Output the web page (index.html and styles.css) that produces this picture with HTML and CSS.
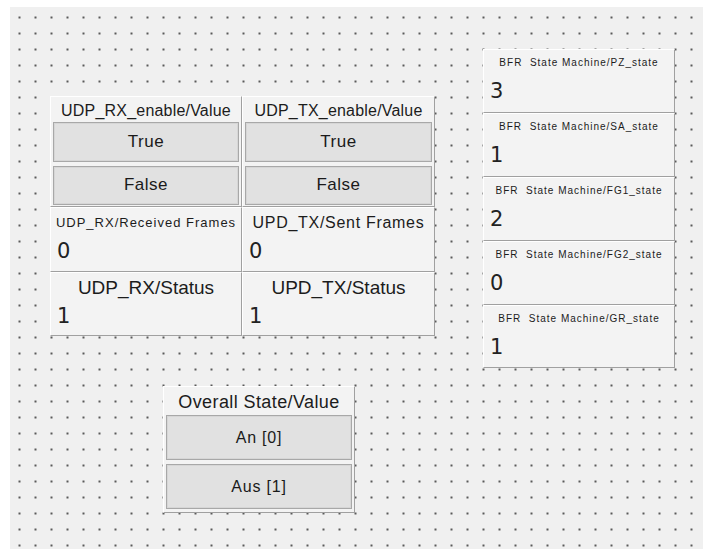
FILE: index.html
```html
<html>

<head>
    <meta name="viewport" content="width=device-width, initial-scale=1.0">
    <meta charset="UTF-8">
    <title>Panel</title>
    <link rel="stylesheet" href="styles.css">
</head>

<body>
    <div id="canvas">
        <div id="top-row">
            <div id="udp">
                <div class="panel switch">
                    <div class="caption">UDP_RX_enable/Value</div>
                    <button class="btn">True</button>
                    <button class="btn">False</button>
                </div>
                <div class="panel switch">
                    <div class="caption">UDP_TX_enable/Value</div>
                    <button class="btn">True</button>
                    <button class="btn">False</button>
                </div>
                <div class="panel readout">
                    <div class="caption small">UDP_RX/Received Frames</div>
                    <div class="value">0</div>
                </div>
                <div class="panel readout">
                    <div class="caption mid">UPD_TX/Sent Frames</div>
                    <div class="value">0</div>
                </div>
                <div class="panel readout">
                    <div class="caption big">UDP_RX/Status</div>
                    <div class="value">1</div>
                </div>
                <div class="panel readout">
                    <div class="caption big">UPD_TX/Status</div>
                    <div class="value">1</div>
                </div>
            </div>
            <div id="bfr">
                <div class="panel state">
                    <div class="caption tiny">BFR&nbsp; State Machine/PZ_state</div>
                    <div class="value">3</div>
                </div>
                <div class="panel state">
                    <div class="caption tiny">BFR&nbsp; State Machine/SA_state</div>
                    <div class="value">1</div>
                </div>
                <div class="panel state">
                    <div class="caption tiny">BFR&nbsp; State Machine/FG1_state</div>
                    <div class="value">2</div>
                </div>
                <div class="panel state">
                    <div class="caption tiny">BFR&nbsp; State Machine/FG2_state</div>
                    <div class="value">0</div>
                </div>
                <div class="panel state last">
                    <div class="caption tiny">BFR&nbsp; State Machine/GR_state</div>
                    <div class="value">1</div>
                </div>
            </div>
        </div>
        <div id="overall" class="panel switch">
            <div class="caption">Overall State/Value</div>
            <button class="btn">An [0]</button>
            <button class="btn">Aus [1]</button>
        </div>
    </div>
</body>

</html>
```

FILE: styles.css
```css
body {
    margin: 0;
    background: #ffffff;
    font-family: "Liberation Sans", Arial, sans-serif;
    color: #1c1c1c;
}

#canvas {
    margin-left: 10px;
    margin-top: 7px;
    width: 693px;
    height: 542px;
    box-sizing: border-box;
    padding-top: 42px;
    background-color: #f0f0f0;
    background-image: radial-gradient(circle, #5a5a5a 0.8px, rgba(90, 90, 90, 0) 1.3px);
    background-size: 16px 16px;
    background-position: 1.5px 2.5px;
}

#top-row {
    display: flex;
    align-items: flex-start;
}

.panel {
    box-sizing: border-box;
    background: #f3f3f3;
    border: 1px solid;
    border-color: #ffffff #a0a0a0 #a0a0a0 #ffffff;
}

.caption {
    text-align: center;
    white-space: nowrap;
}

.value {
    font-family: "DejaVu Sans", sans-serif;
    font-size: 21px;
    padding-left: 6px;
    color: #222;
}

/* udp block */
#udp {
    margin-left: 40px;
    margin-top: 47px;
    display: grid;
    grid-template-columns: 192px 193px;
    grid-template-rows: 111px 65px 64px;
}

.switch {
    display: flex;
    flex-direction: column;
    padding: 0 2px 1px 2px;
}

.switch .caption {
    height: 25px;
    line-height: 28px;
    font-size: 16px;
    letter-spacing: 0.2px;
}

.btn {
    height: 40px;
    margin: 0;
    font-family: "Liberation Sans", Arial, sans-serif;
    font-size: 17px;
    letter-spacing: 0.5px;
    color: #1a1a1a;
    background: #e1e1e1;
    border: 1px solid #a8a8a8;
    box-shadow: inset 0 0 0 1px #d6d6d6;
    padding: 0;
}

.btn+.btn {
    margin-top: 4px;
}

.readout .caption {
    height: 30px;
    line-height: 30px;
}

.readout .value {
    line-height: 26px;
}

.caption.small {
    font-size: 13px;
    letter-spacing: 1px;
}

.caption.mid {
    font-size: 16px;
    letter-spacing: 0.7px;
}

.caption.big {
    font-size: 19px;
}

/* state machine column */
#bfr {
    margin-left: 48px;
    width: 192px;
    display: flex;
    flex-direction: column;
}

.state {
    height: 64px;
}

.state.last {
    height: 63px;
}

.state .caption {
    height: 26px;
    line-height: 26px;
}

.caption.tiny {
    font-size: 10px;
    letter-spacing: 1px;
}

.state .value {
    line-height: 30px;
}

/* overall */
#overall {
    margin-left: 153px;
    margin-top: 18px;
    width: 192px;
    height: 127px;
    padding-bottom: 3px;
}

#overall .caption {
    height: 28px;
    line-height: 30px;
    font-size: 18px;
    letter-spacing: 0.4px;
}

#overall .btn {
    height: 45px;
    font-size: 16px;
    letter-spacing: 0.8px;
}
```
